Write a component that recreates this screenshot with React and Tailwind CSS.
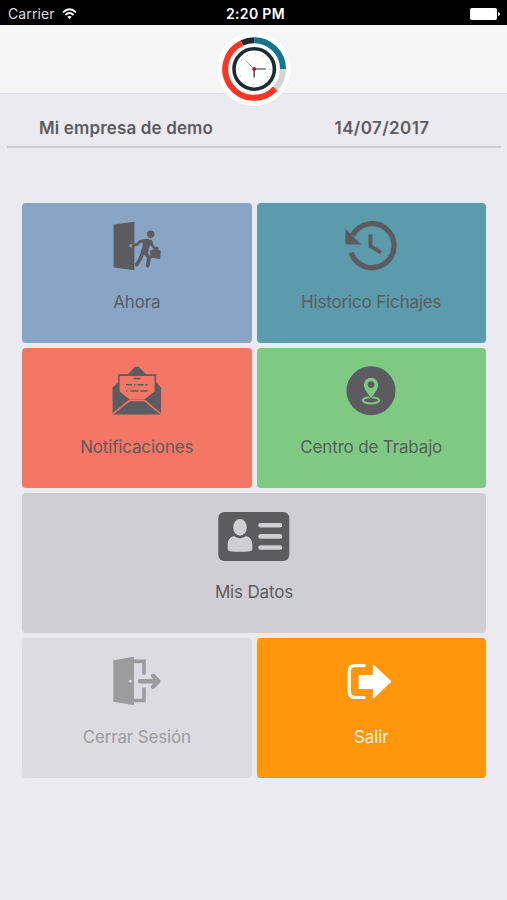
const Logo = () => (
  <svg className="w-[76px] h-[76px]" viewBox="0 0 76 76" fill="none">
    <circle cx="38" cy="38.6" r="37.3" fill="#dcdce0" />
    <circle cx="38" cy="38" r="37.3" fill="#fff" />
    <g strokeWidth="6">
      <path d="M38.2 9.2A28.8 28.8 0 0 1 67 38" stroke="#137594" />
      <path d="M67 38A28.8 28.8 0 0 1 57.8 59.1" stroke="#d4d4d0" />
      <path d="M59.2 57.6A28.8 28.8 0 1 1 26 11.9" stroke="#fb3625" />
      <path d="M26 11.9A28.8 28.8 0 0 1 38.2 9.2" stroke="#1c2a35" />
    </g>
    <circle cx="38.2" cy="38" r="20.2" stroke="#1c2a35" strokeWidth="3.6" />
    <circle cx="38.2" cy="38" r="15.6" stroke="#a9adb2" strokeWidth="1.4" strokeDasharray="0.8 7.368" />
    <path d="M38.2 38L29.5 29.5" stroke="#ee7b72" strokeWidth="0.9" />
    <path d="M38.2 38H50" stroke="#4c4f57" strokeWidth="1.2" />
    <path d="M38.2 38V46.5" stroke="#4c4f57" strokeWidth="1.5" />
    <circle cx="38.2" cy="38" r="2" fill="#a3242b" />
  </svg>
);

const EnterIcon = () => (
  <svg className="w-12 h-[50px]" viewBox="0 0 48 50" fill="none">
    <path d="M.6 3.4L21.4.7V49.3L.6 46.4Z" fill="#5b5b60" />
    <circle cx="18.3" cy="24.6" r="1.9" fill="#88a5c5" />
    <circle cx="37.7" cy="13.3" r="3.7" fill="#5b5b60" />
    <path d="M27.5 19.5L35 17.8L39.8 20.2L36.4 26L34.8 32.5L27.6 31.5L30 23Z" fill="#5b5b60" />
    <g stroke="#5b5b60" strokeLinecap="round" strokeLinejoin="round">
      <path d="M20 24.8L24.4 23.2L27.6 20.1L33.5 19.2" strokeWidth="2.8" />
      <path d="M29.6 31.5L27.4 37.6L23.8 43.6" strokeWidth="3.6" />
      <path d="M32 31.5L36.2 36.5L34.6 44.6" strokeWidth="3.8" />
      <path d="M37.8 20L39.3 24.5L42 27.6" strokeWidth="2.6" />
    </g>
    <path d="M37 29.4L42.4 27.8L43 25.3L45.6 26.2L45.5 28.7L47.8 30.1L47.2 38L37.6 36.8Z" fill="#5b5b60" />
  </svg>
);

const HistoryIcon = () => (
  <svg className="w-[54px] h-[50px]" viewBox="0 0 54 50" fill="none">
    <path d="M7.1 31.5A22 22 0 1 0 8.5 14.5" stroke="#5b5b60" strokeWidth="5.3" />
    <path d="M1.4 7.8L17.2 23.6H1.4Z" fill="#5b5b60" />
    <path d="M26.4 13.4V25.1L37.2 31.6" stroke="#5b5b60" strokeWidth="3.8" />
  </svg>
);

const MailIcon = () => (
  <svg className="w-[50px] h-[50px]" viewBox="0 0 50 50" fill="none">
    <path d="M.6 21.5L6 16.5V8.2H16L22.4 1.6Q25-.8 27.4 1.6L34 8.2H44.2V16.5L49 21.5V48.4H.6Z" fill="#5b5b60" />
    <path d="M7.6 9.9H42.6V25.3L33 33.4H17L7.6 25.3Z" fill="#f47665" />
    <path d="M.6 22L17.4 34.2M49 22L32.6 34.2" stroke="#5b5b60" strokeWidth="1.5" />
    <path d="M.6 48L17.3 34.6H32.7L49 48" stroke="#f47665" strokeWidth="1.5" />
    <g stroke="#5b5b60" strokeWidth="1.6">
      <path d="M21.6 12.5H28.3" />
      <path d="M14 18.8H36" strokeDasharray="6 2 1.5 2 6 2 2 1" />
      <path d="M14 25H35.6" strokeDasharray="1.5 3 8 2 7" />
    </g>
  </svg>
);

const PinIcon = () => (
  <svg className="w-[50px] h-[50px]" viewBox="0 0 50 50" fill="none">
    <circle cx="25" cy="24.7" r="24.5" fill="#5b5b60" />
    <ellipse cx="25" cy="34.3" rx="8.3" ry="3.1" stroke="#7fca83" strokeWidth="2" />
    <path d="M25 33.2C23 29 17.4 24 17.4 18.9A7.6 7.6 0 0 1 32.6 18.9C32.6 24 27 29 25 33.2Z" fill="#7fca83" stroke="#5b5b60" strokeWidth="1" />
    <circle cx="25" cy="18.6" r="3.4" fill="#5b5b60" />
  </svg>
);

const CardIcon = () => (
  <svg className="w-[72px] h-[50px]" viewBox="0 0 72 50" fill="none">
    <rect x=".3" y=".9" width="71" height="49" rx="6" fill="#5b5b60" />
    <ellipse cx="22" cy="16.4" rx="6.8" ry="8.3" fill="#cfced4" />
    <path d="M9.6 38V34.5C9.6 29 12 25.6 16.2 25.2Q22 29.5 27.8 25.2C32 25.6 34.4 29 34.4 34.5V38Q34.2 40 32 40.2Q22 41.5 12 40.2Q9.8 40 9.6 38Z" fill="#cfced4" />
    <path d="M42.5 14.2H62M42.5 25.4H62M42.5 36.5H62" stroke="#cfced4" strokeWidth="4.6" strokeLinecap="round" />
  </svg>
);

const DoorExitIcon = () => (
  <svg className="w-[50px] h-[50px]" viewBox="0 0 50 50" fill="none">
    <path d="M1.3 4.2L22 .7V49.3L1.3 45.7Z" fill="#9c9c9e" />
    <circle cx="18.4" cy="25.2" r="1.4" fill="#dcdbe1" />
    <path d="M22 5.4H32V18.8M32 31.5V44.5H22" stroke="#9c9c9e" strokeWidth="3.6" />
    <path d="M28 25.3H45M41 19.8L46.5 25.3L41 30.8" stroke="#9c9c9e" strokeWidth="4.4" strokeLinecap="round" strokeLinejoin="round" />
  </svg>
);

const ExitIcon = () => (
  <svg className="w-[50px] h-[50px]" viewBox="0 0 50 50" fill="none">
    <path d="M18.3 9.6H9Q3.3 9.6 3.3 15.3V35.8Q3.3 41.5 9 41.5H18.3" stroke="#fff" strokeWidth="3.2" strokeLinecap="round" />
    <path d="M13.4 19.6H27.6V9.6L44.6 25.6L27.6 41.6V32.4H13.4Z" fill="#fff" stroke="#fff" strokeWidth="1.4" strokeLinejoin="round" />
  </svg>
);

const tiles = [
  { label: "Ahora", icon: EnterIcon, style: "bg-[#88a5c5] text-[#5b5b60]" },
  { label: "Historico Fichajes", icon: HistoryIcon, style: "bg-[#5c9bab] text-[#5b5b60]" },
  { label: "Notificaciones", icon: MailIcon, style: "bg-[#f47665] text-[#5b5b60]" },
  { label: "Centro de Trabajo", icon: PinIcon, style: "bg-[#7fca83] text-[#5b5b60]" },
  { label: "Mis Datos", icon: CardIcon, style: "col-span-2 bg-[#cfced4] text-[#5b5b60]" },
  { label: "Cerrar Sesión", icon: DoorExitIcon, style: "bg-[#dcdbe1] text-[#9c9c9e]" },
  { label: "Salir", icon: ExitIcon, style: "bg-[#ff960c] text-[#fff0d8]" },
];

const Tile = ({ label, icon: Icon, style }) => (
  <button className={`flex flex-col items-center h-[140px] pt-[18px] rounded-[4px] ${style}`}>
    <Icon />
    <span className="mt-[18px] text-[17px] leading-[26px] tracking-[-0.16px]">{label}</span>
  </button>
);

const App = () => {
  return (
    <div className="w-full h-screen overflow-hidden bg-[#ebeaf0] font-['Inter',sans-serif]">
      {/* status bar */}
      <div className="grid grid-cols-3 items-center h-[25px] pl-2 pr-[7px] pt-[2px] bg-black text-white text-[14px]">
        <div className="flex items-center gap-[7px] text-[#dedede] tracking-[0.1px]">
          <span>Carrier</span>
          <svg className="w-[15px] h-3" viewBox="0 0 15 12" fill="none">
            <path d="M1 4.3Q7.5-1.7 14 4.3M3.3 7Q7.5 3 11.7 7" stroke="#fff" strokeWidth="1.8" />
            <path d="M5.2 8.8Q7.5 7 9.8 8.8L7.5 11.3Z" fill="#fff" />
          </svg>
        </div>
        <span className="pl-[3px] text-center font-semibold tracking-[0.35px]">2:20 PM</span>
        <svg className="w-[30px] h-3 justify-self-end" viewBox="0 0 30 12" fill="#fff">
          <rect x="0" y="0" width="27" height="12" rx="1.8" />
          <path d="M28 4Q30 4.4 30 6Q30 7.6 28 8Z" />
        </svg>
      </div>

      {/* header */}
      <div className="flex justify-center h-[69px] pt-[6px] bg-[#f5f5f6] border-b border-[#dddde1]">
        <Logo />
      </div>

      {/* company and date */}
      <div className="grid grid-cols-[238px_1fr] h-[54px] ml-[7px] mr-[6px] pt-[21px] border-b-2 border-[#cfced3] text-center text-[17px] leading-[26px] font-semibold text-[#5b5b60]">
        <span className="tracking-[0.15px]">Mi empresa de demo</span>
        <span className="pl-[18px] tracking-[0.4px]">14/07/2017</span>
      </div>

      <div className="grid grid-cols-2 gap-[5px] mt-[55px] ml-[22px] mr-[21px]">
        {tiles.map((tile) => (
          <Tile key={tile.label} {...tile} />
        ))}
      </div>
    </div>
  );
};

export default App;
